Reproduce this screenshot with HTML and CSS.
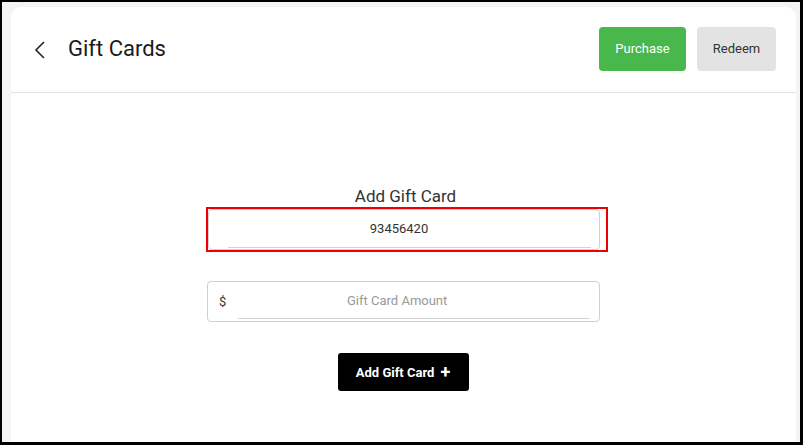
FILE: index.html
```html
<!DOCTYPE html>
<html lang="en">
<head>
  <meta charset="UTF-8" />
  <title>Gift Cards</title>
  <link rel="stylesheet" href="styles.css">
</head>
<body>
  <div class="frame">
    <div class="card">
      <!-- Header -->
      <div class="header">
        <div class="title-wrap">
          <button class="back" aria-label="Back">
            <svg width="14" height="20" viewBox="0 0 14 20"><path d="M10 2 L2 10 L10 18" fill="none" stroke="#222" stroke-width="1.6"/></svg>
          </button>
          <h1>Gift Cards</h1>
        </div>
        <div class="actions">
          <button class="btn-purchase">Purchase</button>
          <button class="btn-redeem">Redeem</button>
        </div>
      </div>

      <!-- Form -->
      <div class="content">
        <div class="label">Add Gift Card</div>
        <div class="highlight">
          <div class="field">
            <input type="text" value="93456420">
          </div>
        </div>
        <div class="field amount">
          <span class="currency">$</span>
          <input type="text" placeholder="Gift Card Amount">
        </div>
        <button class="btn-add">Add Gift Card <span class="plus">+</span></button>
      </div>
    </div>
  </div>
</body>
</html>
```

FILE: styles.css
```css
* {
  margin: 0;
  padding: 0;
  box-sizing: border-box;
}

body {
  width: 803px;
  height: 445px;
  background: #000;
  font-family: Roboto, "Liberation Sans", sans-serif;
  color: #222;
  padding: 2px 3px 3px 2px;
}

.frame {
  height: 100%;
  background: #f3f4f6;
  padding: 5px 4px 0 9px;
}

.card {
  height: 100%;
  background: #fff;
  border-radius: 10px 10px 0 0;
}

.header {
  height: 86px;
  border-bottom: 1px solid #e2e2e2;
  display: flex;
  align-items: center;
  justify-content: space-between;
  padding: 0 20px 2px 23px;
}

.title-wrap {
  display: flex;
  align-items: center;
  gap: 20px;
}

.back {
  background: none;
  border: none;
  display: flex;
  padding-top: 2px;
}

h1 {
  font-size: 22px;
  font-weight: 400;
  color: #1a1a1a;
}

.actions {
  display: flex;
  gap: 11px;
}

.actions button {
  height: 44px;
  border: none;
  border-radius: 4px;
  font-family: inherit;
  font-size: 13px;
}

.btn-purchase {
  width: 87px;
  background: #48b74c;
  color: #fff;
}

.btn-redeem {
  width: 79px;
  background: #e3e3e3;
  color: #333;
}

.content {
  display: flex;
  flex-direction: column;
  align-items: center;
  padding-top: 93px;
}

.label {
  font-size: 17px;
  color: #333;
  line-height: 20px;
  margin-left: 4px;
}

.highlight {
  width: 402px;
  height: 45px;
  border: 2px solid #e00;
  margin-left: 6px;
  margin-top: 1px;
  padding-right: 6px;
}

.field {
  height: 100%;
  border: 1px solid #cfcfcf;
  border-radius: 4px;
  display: flex;
  align-items: stretch;
}

.field input {
  flex: 1;
  border: none;
  border-bottom: 1px solid #d4d4d4;
  margin: 0 8px 1px 19px;
  padding-right: 20px;
  font-family: inherit;
  font-size: 13px;
  color: #333;
  text-align: center;
  outline: none;
  background: transparent;
}

.amount {
  width: 393px;
  height: 41px;
  margin-top: 29px;
  margin-left: 0;
}

.amount .currency {
  font-size: 13px;
  color: #333;
  align-self: center;
  padding-left: 11px;
}

.amount input {
  margin: 0 9px 2px 12px;
  padding-right: 34px;
}

.amount input::placeholder {
  color: #999;
}

.btn-add {
  margin-top: 31px;
  width: 131px;
  height: 38px;
  margin-left: -1px;
  background: #000;
  color: #fff;
  border: none;
  border-radius: 3px;
  font-family: inherit;
  font-size: 13px;
  font-weight: 700;
  display: flex;
  align-items: center;
  justify-content: center;
  gap: 6px;
}

.plus {
  font-size: 18px;
  font-weight: 700;
  line-height: 1;
  margin-top: -1px;
}
```
